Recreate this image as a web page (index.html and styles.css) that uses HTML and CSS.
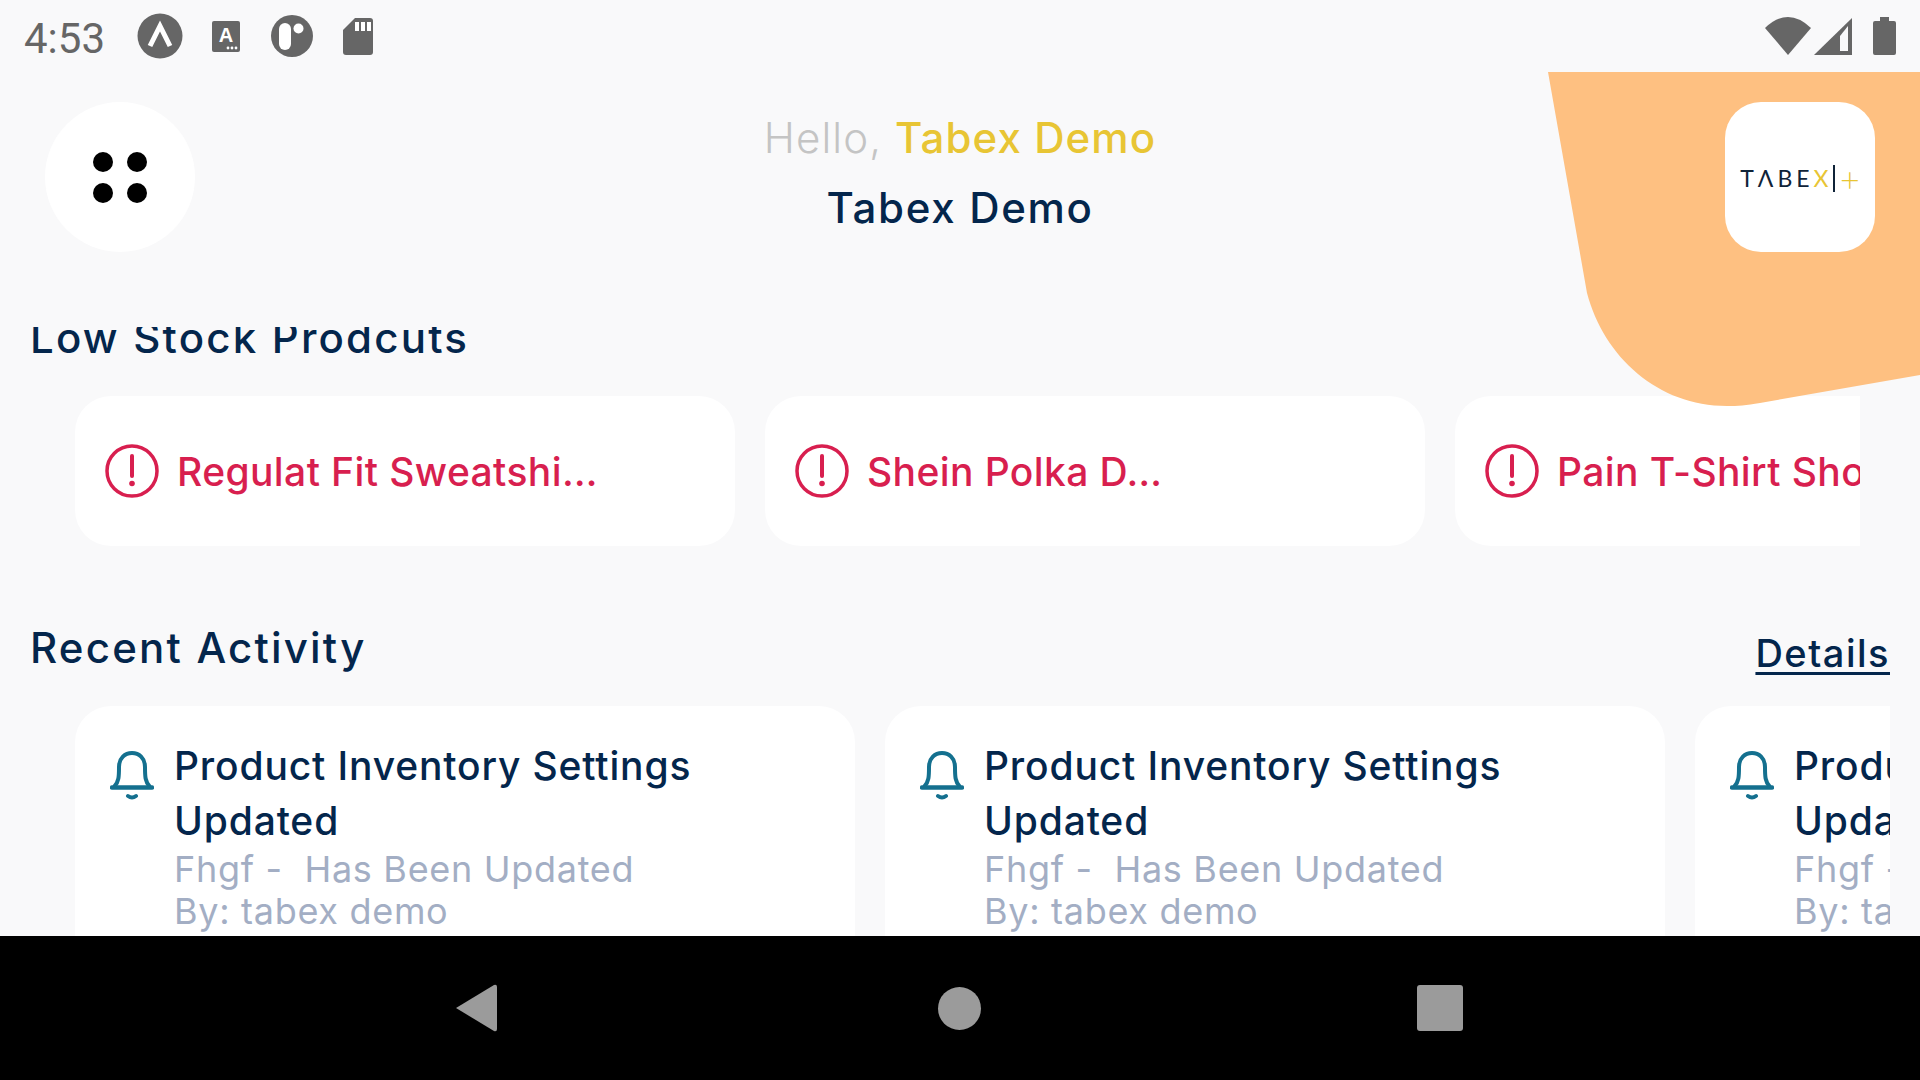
FILE: index.html
```html
<!DOCTYPE html>
<html lang="en">
<head>
<meta charset="utf-8">
<title>Tabex Demo</title>
<link rel="stylesheet" href="styles.css">
</head>
<body>
<div class="screen">
  <header class="status">
    <div class="status-left">
      <span class="time">4:53</span>
      <svg class="si si-a" viewBox="0 0 46 46"><circle cx="23" cy="23" r="22.5" fill="#666"/><path d="M13 33 L23 13 L33 33" fill="none" stroke="#fff" stroke-width="5" stroke-linejoin="miter"/></svg>
      <svg class="si si-b" viewBox="0 0 28 31"><rect width="28" height="31" rx="2" fill="#666"/><text x="14" y="21" text-anchor="middle" class="si-letter">A</text><circle cx="16" cy="27" r="1.4" fill="#fff"/><circle cx="20" cy="27" r="1.4" fill="#fff"/><circle cx="24" cy="27" r="1.4" fill="#fff"/></svg>
      <svg class="si si-c" viewBox="0 0 42 42"><circle cx="21" cy="21" r="21" fill="#666"/><rect x="8" y="8" width="12" height="27" rx="6" fill="#fff"/><circle cx="27.500" cy="13.500" r="5" fill="#fff"/></svg>
      <svg class="si si-d" viewBox="0 0 30 37"><path d="M12 0 H27 a3 3 0 0 1 3 3 V34 a3 3 0 0 1 -3 3 H3 a3 3 0 0 1 -3 -3 V12 Z" fill="#666"/><rect x="12" y="4" width="4" height="9" fill="#fff"/><rect x="18" y="4" width="4" height="9" fill="#fff"/><rect x="24" y="4" width="4" height="9" fill="#fff"/></svg>
    </div>
    <div class="status-right">
      <svg class="si si-wifi" viewBox="0 0 46 38"><path d="M0 11 Q23 -11 46 11 L23 38 Z" fill="#666"/></svg>
      <svg class="si si-sig" viewBox="0 0 38 37"><path d="M38 0 V37 H0 Z" fill="#666"/><path d="M34 8 V33 H26 V18 Z" fill="#f9f9fa"/></svg>
      <svg class="si si-bat" viewBox="0 0 23 38"><path d="M7 0 H16 V4 H21 a2 2 0 0 1 2 2 V36 a2 2 0 0 1 -2 2 H2 a2 2 0 0 1 -2 -2 V6 a2 2 0 0 1 2 -2 H7 Z" fill="#666"/></svg>
    </div>
  </header>

  <main class="main">
    <svg class="blob" viewBox="0 0 372 334"><path d="M0 0 H372 V303 L212 331 C198 333.500 190 334 179 334 C110 334 56 285 39 221 Z" fill="#fec081"/></svg>

    <section class="top">
      <button class="menu" type="button" aria-label="Menu"><span></span><span></span><span></span><span></span></button>
      <div class="greet">
        <p class="hello">Hello, <b>Tabex Demo</b></p>
        <p class="store">Tabex Demo</p>
      </div>
      <div class="logo"><span class="logo-dark">TΛBE</span><span class="logo-gold">X</span><i class="logo-bar"></i><span class="logo-gold logo-plus">+</span></div>
    </section>

    <section class="scroll">
      <h2 class="title title-low">Low Stock Prodcuts</h2>
      <div class="stock-row">
        <article class="stock-card">
          <svg class="alert" viewBox="0 0 54 54"><circle cx="27" cy="27" r="25" fill="none" stroke="currentColor" stroke-width="3.500"/><path d="M27 12 V32" stroke="currentColor" stroke-width="4" stroke-linecap="round"/><circle cx="27" cy="39.500" r="2.800" fill="currentColor"/></svg>
          <span class="stock-name">Regulat Fit Sweatshi…</span>
        </article>
        <article class="stock-card">
          <svg class="alert" viewBox="0 0 54 54"><circle cx="27" cy="27" r="25" fill="none" stroke="currentColor" stroke-width="3.500"/><path d="M27 12 V32" stroke="currentColor" stroke-width="4" stroke-linecap="round"/><circle cx="27" cy="39.500" r="2.800" fill="currentColor"/></svg>
          <span class="stock-name">Shein Polka D…</span>
        </article>
        <article class="stock-card">
          <svg class="alert" viewBox="0 0 54 54"><circle cx="27" cy="27" r="25" fill="none" stroke="currentColor" stroke-width="3.500"/><path d="M27 12 V32" stroke="currentColor" stroke-width="4" stroke-linecap="round"/><circle cx="27" cy="39.500" r="2.800" fill="currentColor"/></svg>
          <span class="stock-name">Pain T-Shirt Short…</span>
        </article>
      </div>

      <div class="activity-head">
        <h2 class="title">Recent Activity</h2>
        <a class="details" href="#">Details</a>
      </div>
      <div class="activity-row">
        <article class="activity-card">
          <svg class="bell" viewBox="0 0 44 50"><path d="M4 36 C9 31 9 25 9 16 C9 7 15 2 22 2 C29 2 35 7 35 16 C35 25 35 31 40 36" fill="none" stroke="currentColor" stroke-width="4"/><path d="M2 36.500 H42" stroke="currentColor" stroke-width="4.500" stroke-linecap="round"/><path d="M18 45 Q22 48 26 45" fill="none" stroke="currentColor" stroke-width="4" stroke-linecap="round"/></svg>
          <div class="activity-text">
            <h3 class="activity-title">Product Inventory Settings Updated</h3>
            <p class="activity-sub">Fhgf -&nbsp; Has Been Updated</p>
            <p class="activity-sub">By: tabex demo</p>
          </div>
        </article>
        <article class="activity-card">
          <svg class="bell" viewBox="0 0 44 50"><path d="M4 36 C9 31 9 25 9 16 C9 7 15 2 22 2 C29 2 35 7 35 16 C35 25 35 31 40 36" fill="none" stroke="currentColor" stroke-width="4"/><path d="M2 36.500 H42" stroke="currentColor" stroke-width="4.500" stroke-linecap="round"/><path d="M18 45 Q22 48 26 45" fill="none" stroke="currentColor" stroke-width="4" stroke-linecap="round"/></svg>
          <div class="activity-text">
            <h3 class="activity-title">Product Inventory Settings Updated</h3>
            <p class="activity-sub">Fhgf -&nbsp; Has Been Updated</p>
            <p class="activity-sub">By: tabex demo</p>
          </div>
        </article>
        <article class="activity-card">
          <svg class="bell" viewBox="0 0 44 50"><path d="M4 36 C9 31 9 25 9 16 C9 7 15 2 22 2 C29 2 35 7 35 16 C35 25 35 31 40 36" fill="none" stroke="currentColor" stroke-width="4"/><path d="M2 36.500 H42" stroke="currentColor" stroke-width="4.500" stroke-linecap="round"/><path d="M18 45 Q22 48 26 45" fill="none" stroke="currentColor" stroke-width="4" stroke-linecap="round"/></svg>
          <div class="activity-text">
            <h3 class="activity-title">Product Inventory Settings Updated</h3>
            <p class="activity-sub">Fhgf -&nbsp; Has Been Updated</p>
            <p class="activity-sub">By: tabex demo</p>
          </div>
        </article>
      </div>
    </section>
  </main>

  <nav class="nav">
    <svg class="nav-back" viewBox="0 0 42 48"><path d="M1 24 L39 1 Q42 0 42 3 V45 Q42 48 39 47 Z" fill="#9b9b9b"/></svg>
    <span class="nav-home"></span>
    <span class="nav-recent"></span>
  </nav>
</div>
</body>
</html>
```
FILE: styles.css
```css
* { box-sizing: border-box; }
html, body { margin: 0; padding: 0; }
body { width: 1920px; height: 1080px; overflow: hidden; background: #f9f9fa; font-family: Inter, "Noto Sans", sans-serif; color: #04264c; }
h2, h3, p { margin: 0; }

.screen { width: 1920px; height: 1080px; display: flex; flex-direction: column; position: relative; }

/* status bar */
.status { height: 72px; flex: none; display: flex; justify-content: space-between; align-items: center; padding: 0 24px 0 24px; }
.status-left, .status-right { display: flex; align-items: center; }
.time { font-family: Roboto, sans-serif; font-size: 42px; color: #666; width: 80px; line-height: 72px; margin-top: 6px; white-space: nowrap; }
.si { display: block; flex: none; }
.si-letter { font-family: "Liberation Sans", sans-serif; font-weight: 700; font-size: 20px; fill: #fff; }
.si-a { width: 46px; height: 46px; margin-left: 33px; }
.si-b { width: 28px; height: 31px; margin-left: 29px; }
.si-c { width: 42px; height: 42px; margin-left: 31px; }
.si-d { width: 30px; height: 37px; margin-left: 30px; }
.si-wifi { width: 46px; height: 38px; }
.si-sig { width: 38px; height: 37px; margin-left: 3px; }
.si-bat { width: 23px; height: 38px; margin-left: 21px; }

/* main area */
.main { flex: 1; min-height: 0; position: relative; overflow: hidden; }
.blob { position: absolute; top: 0; right: 0; width: 372px; height: 334px; z-index: 2; }

.top { display: flex; align-items: flex-start; padding: 30px 45px 0; }
.menu { width: 150px; height: 150px; flex: none; border: 0; padding: 0; border-radius: 50%; background: #fff; display: grid; grid-template-columns: 20px 20px; grid-auto-rows: 20px; column-gap: 14px; row-gap: 11px; align-content: center; justify-content: center; }
.menu span { background: #000; border-radius: 50%; }
.greet { flex: 1; text-align: center; padding-top: 11px; }
.hello { font-size: 42px; line-height: 50px; font-weight: 300; color: #c4c4c4; letter-spacing: 1.100px; white-space: nowrap; }
.hello b { font-weight: 500; color: #e8c534; }
.store { font-size: 42px; line-height: 50px; margin-top: 20px; font-weight: 500; color: #04264c; letter-spacing: 1.700px; }
.logo { width: 150px; height: 150px; flex: none; background: #fff; border-radius: 36px; position: relative; z-index: 3; display: flex; align-items: center; justify-content: center; padding-top: 3px; font-family: Lato, sans-serif; font-weight: 400; font-size: 23px; letter-spacing: 4px; line-height: 1; }
.logo-dark { color: #0f2338; }
.logo-gold { color: #e8c534; }
.logo-bar { width: 1.500px; height: 27px; background: #0f2338; margin: 0 5px 0 1px; }
.logo-plus { font-size: 34px; letter-spacing: 0; font-weight: 300; }

/* scrolling content */
.scroll { margin-top: 75px; height: 609px; overflow: hidden; }
.title { font-size: 42px; line-height: 50px; font-weight: 500; color: #04264c; padding-left: 30px; letter-spacing: 2.200px; }
.title-low { margin-top: -14px; }

.stock-row { width: 1860px; margin-top: 33px; padding-left: 75px; display: flex; gap: 30px; overflow: hidden; }
.stock-card { width: 660px; height: 150px; flex: none; background: #fff; border-radius: 36px; padding-left: 30px; display: flex; align-items: center; gap: 18px; color: #d81f4f; }
.alert { width: 54px; height: 54px; flex: none; }
.stock-name { font-size: 39px; font-weight: 500; white-space: nowrap; letter-spacing: 0.400px; }

.activity-head { display: flex; justify-content: space-between; align-items: center; padding-right: 30px; margin-top: 77px; height: 50px; }
.details { font-size: 38px; line-height: 50px; margin-top: 10px; font-weight: 500; color: #04264c; letter-spacing: 1.500px; text-decoration: underline; text-decoration-thickness: 2.500px; text-underline-offset: 5px; }

.activity-row { width: 1890px; margin-top: 33px; padding-left: 75px; display: flex; gap: 30px; overflow: hidden; }
.activity-card { width: 780px; height: 400px; flex: none; background: #fff; border-radius: 36px; padding: 32px 0 0 35px; display: flex; align-items: flex-start; gap: 20px; }
.bell { width: 44px; height: 50px; flex: none; margin-top: 13px; color: #14708f; }
.activity-text { width: 640px; }
.activity-title { font-size: 39px; line-height: 55px; font-weight: 500; color: #04264c; max-width: 600px; letter-spacing: 0.850px; }
.activity-sub { font-size: 36px; line-height: 42px; font-weight: 400; color: #a3aec4; white-space: nowrap; letter-spacing: 0.700px; }

/* nav bar */
.nav { height: 144px; flex: none; background: #000; display: flex; align-items: center; justify-content: center; padding-right: 2px; }
.nav-back { width: 42px; height: 48px; flex: none; }
.nav-home { width: 43px; height: 43px; flex: none; background: #9b9b9b; border-radius: 50%; margin: 0 436px 0 441px; }
.nav-recent { width: 46px; height: 46px; flex: none; background: #9b9b9b; border-radius: 3px; }
```
